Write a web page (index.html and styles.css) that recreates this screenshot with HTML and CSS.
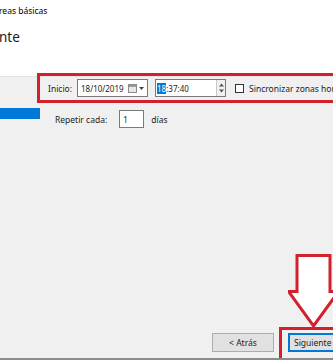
FILE: index.html
```html
<!DOCTYPE html>
<html lang="es">
<head>
  <meta charset="UTF-8">
  <title>Asistente para crear tareas básicas</title>
  <link rel="stylesheet" href="styles.css">
</head>
<body>
  <div class="wizard">
    <div class="header">
      <div class="crumb">reas básicas</div>
      <div class="title">nte</div>
    </div>

    <div class="main">
      <div class="side">
        <div class="step active"></div>
      </div>

      <div class="content">
        <div class="row start mark">
          <span class="lbl">Inicio:</span>
          <div class="field date">
            <span>18/10/2019</span>
            <span class="cal">
              <svg width="9" height="9" viewBox="0 0 9 9"><rect x="0.5" y="0.5" width="8" height="8" fill="#e8e8e8" stroke="#8a8a8a"/><rect x="1" y="1" width="7" height="2" fill="#9a9a9a"/></svg>
              <svg width="5" height="3" viewBox="0 0 5 3"><path d="M0 0h5L2.5 3z" fill="#444"/></svg>
            </span>
          </div>
          <div class="field time">
            <span><span class="sel">18</span>:37:40</span>
            <span class="spin">
              <svg width="7" height="14" viewBox="0 0 7 14"><path d="M1 5.5L3.5 2.5 6 5.5z M1 8.5L3.5 11.5 6 8.5z" fill="#555"/></svg>
            </span>
          </div>
          <span class="check"></span>
          <span class="lbl">Sincronizar zonas horarias</span>
        </div>

        <div class="row repeat">
          <span class="lbl">Repetir cada:</span>
          <div class="field num">1</div>
          <span class="lbl">días</span>
        </div>

        <div class="buttons">
          <button class="btn back">&lt; Atrás</button>
          <div class="mark next-wrap">
            <button class="btn default">Siguiente &gt;</button>
          </div>
        </div>
      </div>
    </div>

    <svg class="arrow" width="52" height="78" viewBox="0 0 52 78">
      <path d="M9 1.5h33v36h8.5L25.5 72 0.5 37.5H9z" fill="#fff" stroke="#d2202d" stroke-width="3"/>
    </svg>
  </div>
</body>
</html>
```

FILE: styles.css
```css
* { box-sizing: border-box; margin: 0; padding: 0; }
html, body { width: 333px; height: 360px; overflow: hidden; }
body { font-family: "Noto Sans", "Open Sans", sans-serif; font-size: 8.5px; color: #000; background: #f0f0f0; }

.wizard { position: relative; height: 360px; display: flex; flex-direction: column; border-bottom: 2px solid #8c8c8c; }

.header { height: 77px; background: #fff; border-bottom: 1px solid #e4e4e4; padding-top: 5px; }
.crumb { font-size: 8.5px; line-height: 12px; margin-left: -1px; }
.title { font-size: 13.5px; line-height: 18px; margin-top: 11px; margin-left: -1px; color: #1a1a1a; }

.main { flex: 1; display: flex; }
.side { width: 40px; padding-top: 31px; }
.step { height: 11px; }
.step.active { background: #0078d7; }

.content { flex: 1; display: flex; flex-direction: column; }

.mark { border: 3px solid #d2202d; }

.row { display: flex; align-items: center; }
.row.start { height: 30px; margin-top: -4px; margin-left: -3px; margin-right: -40px; padding-left: 8px; }
.row.repeat { height: 18px; margin-top: 7px; padding-left: 15px; }

.lbl { color: #222; white-space: nowrap; }

.field { height: 18px; background: #fff; border: 1px solid #7a7a7a; display: flex; align-items: center; padding-left: 3px; color: #222; font-size: 8px; }
.date { width: 71px; margin-left: 5px; justify-content: space-between; padding-right: 3px; }
.cal { display: flex; align-items: center; gap: 2px; }
.time { width: 71px; margin-left: 7px; justify-content: space-between; padding-left: 1px; }
.sel { background: #0078d7; color: #fff; }
.spin { width: 9px; height: 16px; border-left: 1px solid #c8c8c8; background: #f0f0f0; display: flex; align-items: center; justify-content: center; }
.check { width: 9px; height: 9px; border: 1px solid #333; background: #fff; margin-left: 9px; margin-right: 5px; }

.num { width: 25px; margin-left: 12px; margin-right: 7px; }

.buttons { margin-top: auto; display: flex; justify-content: flex-end; align-items: flex-end; margin-right: -40px; }
.btn { font-family: inherit; font-size: 8.5px; height: 19px; background: #e1e1e1; border: 1px solid #adadad; color: #222; }
.btn.back { width: 62px; margin-bottom: 6px; margin-right: 5px; }
.next-wrap { padding: 3px 0 6px 6px; border-right: none; border-bottom: none; }
.btn.default { width: 85px; text-align: left; padding-left: 5px; border-color: #0078d7; box-shadow: inset 0 0 0 1px #0078d7; }

.arrow { position: absolute; left: 288px; top: 254px; }
```
